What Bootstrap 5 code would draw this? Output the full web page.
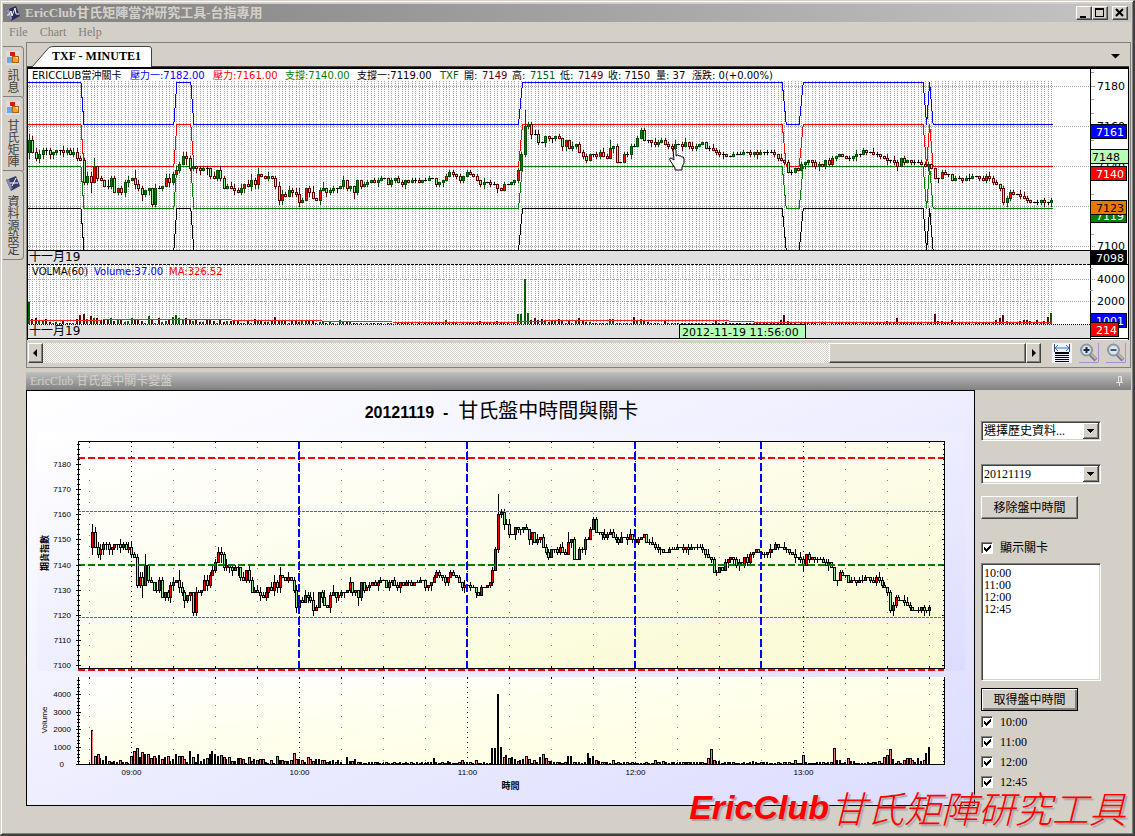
<!DOCTYPE html>
<html lang="zh-Hant">
<head>
<meta charset="utf-8">
<meta name="viewport" content="width=device-width, initial-scale=1">
<title>EricClub甘氏矩陣當沖研究工具-台指專用</title>
<link href="https://cdn.jsdelivr.net/npm/bootstrap@5.3.0/dist/css/bootstrap.min.css" rel="stylesheet">
<style>
:root{--face:#d4d0c8;--shade:#808080;--dark:#404040}
body{background:var(--face);color:#000;font:12px/16px "Liberation Serif","Noto Sans CJK TC",serif}
svg{display:block}
.app-window{border:1px solid var(--face);border-right:2px solid var(--dark);border-bottom:2px solid var(--dark);box-shadow:inset 1px 1px #fff,inset -1px -1px var(--shade);padding:3px 2px 2px 2px}
.caption-bar{height:18px;padding:0 3px 0 2px;background:linear-gradient(90deg,#808080,#c4c4c4);color:var(--face);font-size:13px;font-weight:700;line-height:18px}
.raised{border:1px solid;border-color:#fff var(--dark) var(--dark) #fff;box-shadow:inset -1px -1px var(--shade);background:var(--face);border-radius:0;padding:0;color:#000}
.cap-btn{width:16px;height:14px}
.menu-bar{height:20px;gap:12px;padding-left:6px}
.menu-bar a{color:#808080;text-decoration:none;line-height:20px}
.work-area{gap:2px}
.dock{width:21px;padding-top:5px}
.dock-tab{border:solid var(--shade);border-width:1px 1px 0 0;border-radius:0 4px 0 0;background:none;padding:4px 0;color:#404040;margin-top:-1px;line-height:20px}
.dock-tab:last-child{border-bottom-width:1px;border-radius:0 4px 4px 0}
.dock-tab span{writing-mode:vertical-rl;text-orientation:upright;font-family:"Noto Sans CJK TC",sans-serif;font-size:12px;margin-top:4px}
.doc-frame{border:1px solid var(--shade);padding-right:1px}
.tab-strip{height:24px;border-bottom:1px solid var(--dark)}
.doc-tab{position:relative;z-index:1;width:126px;height:24px;padding:3px 0 0 25px;border:0;background:none;font-weight:700;line-height:18px;text-align:left;white-space:nowrap}
.doc-tab svg{position:absolute;left:0;top:0;z-index:-1}
.chart-top{height:273px}
.scroll-row{height:27px;padding:3px 3px 4px 1px}
.track{background:repeating-conic-gradient(#fff 0 25%,#d4d0c8 0 50%) 0 0/2px 2px;height:20px}
.arrow-btn{width:15px;height:20px}
.thumb{width:197px;height:20px}
.tools{margin-left:11px;gap:7px}
.tool{width:20px;height:20px;border:0;padding:0;background:var(--face)}
.pane-title{height:18px;background:linear-gradient(#c0c0c0,#808080);color:var(--face);line-height:19px;padding:0 7px 0 4px}
.chart-bottom{height:416px}
.side{width:156px;padding:31px 0 0 6px}
.side select{width:120px;border-radius:0;color:#000;background-color:#fff;border:1px solid;border-color:var(--shade) #fff #fff var(--shade);box-shadow:inset 1px 1px var(--dark),inset -1px -1px var(--face);font:inherit;padding:0 2px}
.side .combo{appearance:none;height:20px;line-height:16px;background:#fff url("data:image/svg+xml,%3Csvg xmlns='http://www.w3.org/2000/svg' width='16' height='16' shape-rendering='crispEdges'%3E%3Cpath fill='%23404040' d='M0 0h16v16H0z'/%3E%3Cpath fill='%23fff' d='M0 0h15v15H0z'/%3E%3Cpath fill='%23808080' d='M1 1h14v14H1z'/%3E%3Cpath fill='%23d4d0c8' d='M1 1h13v13H1z'/%3E%3Cpath d='M4 6h7v1H4zM5 7h5v1H5zM6 8h3v1H6zM7 9h1v1H7z'/%3E%3C/svg%3E") no-repeat right 1px top 1px}
.side .combo + .combo{margin-top:23px}
.side .combo + .push{margin-top:12px}
.side .push + .levels{margin-top:19px}
.side .listing{height:118px;overflow:hidden;padding:2px;margin-top:5px}
.side .listing option{display:block;padding:0;height:12px;min-height:12px;line-height:12px;overflow:visible}
.side .listing + .push{margin:7px 0 1px}
.push{width:97px;height:23px;line-height:20px}
.push.is-default{outline:1px solid #000;outline-offset:-1px;border-color:#000;box-shadow:inset 1px 1px #fff,inset -2px -2px var(--shade)}
.tick-row{height:20px;gap:7px}
.tick-row input{appearance:none;width:12px;height:12px;margin:0;background:#fff;border:1px solid;border-color:var(--shade) #fff #fff var(--shade);box-shadow:inset 1px 1px var(--dark)}
.tick-row input:checked{background:#fff url("data:image/svg+xml,%3Csvg xmlns='http://www.w3.org/2000/svg' width='10' height='10' shape-rendering='crispEdges'%3E%3Cpath d='M2 4h1v3H2zM3 5h1v3H3zM4 6h1v3H4zM5 5h1v3H5zM6 4h1v3H6zM7 3h1v3H7zM8 2h1v3H8z'/%3E%3C/svg%3E") no-repeat}
.brand-mark{position:absolute;right:7px;bottom:7px;gap:1px;color:#f00;font:italic 700 34px/40px "Liberation Sans",sans-serif;text-shadow:2px 2px 1px #a8a8a8;pointer-events:none;white-space:nowrap}
.brand-mark span{font:italic 300 37px/40px "Noto Sans CJK TC",sans-serif}
.t-data{font-family:"DejaVu Sans","Noto Sans CJK TC",sans-serif}
.t-plot{font-family:"Liberation Sans","Noto Sans CJK TC",sans-serif}
</style>
</head>
<body>
<div class="app-window min-vh-100 d-flex flex-column position-relative">
  <header class="caption-bar d-flex align-items-center">
    <svg width="16" height="16" viewBox="0 0 16 16" class="flex-shrink-0"><path d="M1 5l10-4 4 10-9 5z" fill="#2c2c5c"/><path d="M1 5l5 11 1-3-3-9z" fill="#9090b8"/><path d="M2 10h2l2-4 1 5 3-8 1 6h3" fill="none" stroke="#fff"/></svg>
    <span class="flex-grow-1 ps-1">EricClub甘氏矩陣當沖研究工具-台指專用</span>
    <button class="raised cap-btn" aria-label="最小化"><svg width="14" height="12"><path d="M3 9h6v2H3z"/></svg></button>
    <button class="raised cap-btn me-1" aria-label="最大化"><svg width="14" height="12" shape-rendering="crispEdges"><path d="M2 1h9v9H2zM3 3v6h7V3z" fill-rule="evenodd"/></svg></button>
    <button class="raised cap-btn" aria-label="關閉"><svg width="14" height="12"><path d="M3 2l7 7M10 2l-7 7" stroke="#000" stroke-width="2"/></svg></button>
  </header>
  <nav class="menu-bar d-flex"><a href="#">File</a><a href="#">Chart</a><a href="#">Help</a></nav>

  <div class="work-area d-flex flex-grow-1">
    <div class="dock d-flex flex-column flex-shrink-0">
      <button class="dock-tab d-flex flex-column align-items-center"><svg width="14" height="14"><use href="#ico-blocks"/></svg><span>訊息</span></button>
      <button class="dock-tab d-flex flex-column align-items-center"><svg width="14" height="14"><use href="#ico-blocks"/></svg><span>甘氏矩陣</span></button>
      <button class="dock-tab d-flex flex-column align-items-center"><svg width="16" height="16" viewBox="0 0 16 16"><path d="M1 5l10-4 4 10-9 5z" fill="#3c3c68"/><path d="M1 5l5 11 1-3-3-9z" fill="#8888b0"/><path d="M5 8h8M11 3L7 11" stroke="#fff" fill="none"/></svg><span>資料源設定</span></button>
    </div>
    <svg width="0" height="0" class="position-absolute"><symbol id="ico-blocks" viewBox="0 0 14 14"><path d="M0 0h14v14H0z" fill="#dcdcdc"/><path d="M4 1h5v4H4z" fill="#d02010"/><path d="M1 6h5v6H1z" fill="#6aa8e0"/><path d="M6 5h7v7H6z" fill="#b06010"/><path d="M7 6h5v5H7z" fill="#f8a028"/><path d="M9 6h3v3z" fill="#ffe0a0"/></symbol></svg>

    <main class="flex-grow-1 overflow-hidden">
      <section class="doc-frame">
        <div class="tab-strip d-flex justify-content-between align-items-center pe-1">
          <button class="doc-tab"><svg width="126" height="24"><path d="M5 24L22 4.500Q24 3.500 27 3.500H122Q124.500 3.500 124.500 6V24" fill="#fff" stroke="#404040"/></svg>TXF - MINUTE1</button>
          <svg width="10" height="6" class="me-1 mt-1"><path d="M0 0h9L4.500 4.500z"/></svg>
        </div>
        <div class="chart-top" id="top"></div>
        <div class="scroll-row d-flex align-items-center">
          <button class="raised arrow-btn" aria-label="向左捲動"><svg width="13" height="18"><path d="M8 5v8L4 9z"/></svg></button>
          <div class="track flex-grow-1 d-flex justify-content-end"><div class="raised thumb"></div></div>
          <button class="raised arrow-btn" aria-label="向右捲動"><svg width="13" height="18"><path d="M5 5v8l4-4z"/></svg></button>
          <div class="tools d-flex">
            <button class="tool" aria-label="符合寬度"><svg width="20" height="20"><path d="M0 0h20v20H0z" fill="#f0f2ff"/><path d="M4 5h12M6 2L3 5l3 3M14 2l3 3-3 3" stroke="#3878c0" fill="none"/><path d="M2.500 1v8M17.500 1v8" stroke="#446"/><path d="M3 9h14v2H3zM3 12h14v1H3zM3 14h14v1H3zM3 16h14v1H3zM3 18h14v1H3z"/></svg></button>
            <button class="tool" aria-label="放大"><svg width="20" height="20"><path d="M19.500 0v19.500H0" stroke="#a890d8" fill="none"/><path d="M11 11l6 6" stroke="#7878a0" stroke-width="4"/><path d="M12 11l5 5" stroke="#d0b090" stroke-width="2"/><circle cx="7.500" cy="7" r="5.500" fill="#d8e8f0" stroke="#8898a8" stroke-width="2"/><path d="M4.500 7h6M7.500 4v6" stroke="#223" stroke-width="2"/></svg></button>
            <button class="tool" aria-label="縮小"><svg width="20" height="20"><path d="M19.500 0v19.500H0" stroke="#a890d8" fill="none"/><path d="M11 11l6 6" stroke="#7878a0" stroke-width="4"/><path d="M12 11l5 5" stroke="#d0b090" stroke-width="2"/><circle cx="7.500" cy="7" r="5.500" fill="#d8e8f0" stroke="#8898a8" stroke-width="2"/><path d="M4.500 7h6" stroke="#556" stroke-width="2"/></svg></button>
          </div>
        </div>
      </section>

      <section class="mt-1">
        <div class="pane-title d-flex justify-content-between align-items-center"><span>EricClub 甘氏盤中關卡變盤</span><svg width="8" height="10" fill="none" stroke="#e8e4dc"><path d="M2.500 6V.5h3V6M5 1v5M0 6.500h7M3.500 7v3"/></svg></div>
        <div class="d-flex">
          <div class="chart-bottom flex-grow-1 overflow-hidden" id="bottom"></div>
          <form class="side flex-shrink-0">
            <select class="combo d-block" aria-label="歷史資料"><option>選擇歷史資料...</option></select>
            <select class="combo d-block" aria-label="日期"><option>20121119</option></select>
            <button type="button" class="raised push d-block">移除盤中時間</button>
            <div class="tick-row levels d-flex align-items-center"><input type="checkbox" id="lv" checked><label for="lv">顯示關卡</label></div>
            <select multiple class="listing d-block" aria-label="盤中時間"><option>10:00</option><option>11:00</option><option>12:00</option><option>12:45</option></select>
            <button type="button" class="raised push is-default d-block">取得盤中時間</button>
            <div class="tick-row d-flex align-items-center"><input type="checkbox" id="t1" checked><label for="t1">10:00</label></div>
            <div class="tick-row d-flex align-items-center"><input type="checkbox" id="t2" checked><label for="t2">11:00</label></div>
            <div class="tick-row d-flex align-items-center"><input type="checkbox" id="t3" checked><label for="t3">12:00</label></div>
            <div class="tick-row d-flex align-items-center"><input type="checkbox" id="t4" checked><label for="t4">12:45</label></div>
          </form>
        </div>
      </section>
    </main>
  </div>
  <div class="brand-mark d-flex"><strong>EricClub</strong><span>甘氏矩陣研究工具</span></div>
</div>

<script src="https://cdn.jsdelivr.net/npm/bootstrap@5.3.0/dist/js/bootstrap.bundle.min.js"></script>
<script>
// One-minute closes (points above 7100), minutes counted from 08:45
const closes = [53,47,44,46,48,48,46,47,48,48,47,48,46,47,44,43,32,35,32,40,34,33,30,30,34,27,29,27,32,33,34,31,29,26,28,29,21,29,29,30,34,32,36,38,41,45,44,39,40,39,38,39,39,35,34,38,34,29,30,29,28,27,29,31,30,33,31,36,35,34,35,34,30,23,26,25,28,27,26,22,23,29,27,24,23,28,29,27,28,29,29,30,33,29,30,27,33,30,31,32,33,32,33,34,34,31,33,34,32,31,33,32,33,33,32,33,33,34,34,31,32,33,35,37,36,35,33,35,37,36,35,33,31,32,32,31,31,29,28,31,31,32,33,38,46,60,61,56,56,52,52,55,54,54,55,54,50,53,49,50,51,47,45,43,46,46,45,47,45,44,49,50,42,42,46,46,50,50,54,58,53,53,52,51,52,53,51,50,49,51,51,50,52,50,49,50,51,52,49,49,48,47,46,46,45,45,46,46,46,47,47,46,47,46,47,47,47,47,46,44,43,42,37,37,39,38,41,42,43,42,40,41,40,43,41,44,45,46,45,44,44,45,46,46,48,47,47,46,46,45,44,43,43,42,40,44,42,43,42,42,42,41,40,41,39,34,34,37,36,36,33,34,34,33,34,34,35,35,34,33,35,34,32,31,29,22,24,27,26,26,25,24,23,22,22,22,23,22,23,23,24,22,23];
const close = closes.map(v => 7100 + v);
while (close.length < 300) close.splice(290, 0, 7123);
close.length = 300;
close[298] = 7122; close[299] = 7123;
const rnd = i => { const s = Math.sin(i * 127.1) * 43758.5453; return s - Math.floor(s); };
const hiAt = {1:7156,20:7144,32:7138,46:7147,68:7139,124:7138,146:7168,147:7162,171:7153,180:7159};
const loAt = {1:7144,19:7127,34:7123,37:7120,96:7124,121:7130,173:7142,255:7138,266:7134,300:7120};
const bars = close.map((c, i) => {
  const o = i ? close[i - 1] : 7147, m = i + 1;
  const amp = m < 90 ? 3.2 : 2.3;
  return {m, o, c, h: hiAt[m] || Math.max(o, c) + Math.floor(rnd(m) * amp), l: loAt[m] || Math.min(o, c) - Math.floor(rnd(m + 500) * amp)};
});
// Minute volume in units of 19 contracts
const volStart = [103,24,30,18,12,24,9,7,9,7,12,7,6,4,25,40,48,22,36,30,30,18,24,18,28,14,20,24,9,16,30,24,24,16,7,38,21,7,30,10,14,18,31,40,30,24,27,20,16,21,8,9,18,18,16,3,21,8,16,12,15,14,6,4,12,4,24,12,12,9,9,12,34,16,16,12,7,21,15,10,14,14,12,12,7,10,12,6,12,6,1,20,10,8,15,6];
const volAt = {123:18,128:9,133:12,138:12,144:48,145:48,146:210,147:50,148:20,149:27,150:18,151:22,152:16,153:10,154:12,155:16,156:24,157:14,159:12,161:20,162:30,163:18,164:10,165:9,171:24,172:24,178:33,179:18,180:24,181:12,182:8,187:12,202:12,205:9,221:18,222:44,223:12,224:10,225:9,237:9,252:12,255:27,266:48,267:12,268:12,271:18,272:10,273:9,282:10,284:20,285:28,286:44,287:15,289:10,291:12,292:18,293:18,294:12,296:18,297:9,298:12,299:33,300:50};
bars.forEach(b => b.v = (volStart[b.m - 1] || volAt[b.m] || 2 + Math.floor(rnd(b.m + 900) * 6)) * 19);

const R = (x, y, w, h, f) => `<rect x="${x}" y="${y}" width="${w}" height="${h}" fill="${f}"/>`;
const L = (x1, y1, x2, y2, s, x = '') => `<path d="M${x1} ${y1}L${x2} ${y2}" stroke="${s}" ${x}/>`;
const T = (x, y, s, size, f = '#000', x2 = '') => `<text x="${x}" y="${y}" font-size="${size}" fill="${f}" ${x2}>${s}</text>`;

function candle(b, x, y, up, dn, flat) {
  const col = b.c > b.o ? up : b.c < b.o ? dn : flat;
  const t = Math.round(y(Math.max(b.o, b.c))), e = Math.round(y(Math.min(b.o, b.c)));
  const h = Math.round(y(b.h)), l = Math.round(y(b.l));
  let s = R(x, h, 1, l - h + 1, col);
  s += R(x - 1, t, 3, e - t + 1, col);
  if (e - t > 1) s += R(x, t + 1, 1, e - t - 1, b.c > b.o ? '#ff0000' : '#90ee90');
  return s;
}

function drawTop() {
  const box = document.getElementById('top'), W = box.clientWidth, H = 273;
  const ax = W - 39, end = ax - 38, step = (end - 3) / 299;
  const X = m => Math.round(2 + (m - 1) * step), Y = p => 19 + (7180 - p) * 2, V = v => 257 - v * 0.01125;
  let s = R(0, 0, W, H, '#fff') + R(1, 184, ax, 13, '#e0e0e0') + R(1, 258, ax, 14, '#e0e0e0');
  for (let m = 1; m <= 300; m++) {
    s += L(X(m) + .5, 14, X(m) + .5, 183, '#a0a0a0', 'stroke-dasharray="1 1"');
    s += L(X(m) + .5, 198, X(m) + .5, 257, '#a0a0a0', 'stroke-dasharray="1 1"');
  }
  [7180, 7160, 7140, 7120, 7100].forEach(p => s += L(1, Y(p) + .5, ax + 5, Y(p) + .5, '#a0a0a0', 'stroke-dasharray="1 1"'));
  [212.5, 234.5].forEach(y => s += L(1, y, ax + 5, y, '#a0a0a0', 'stroke-dasharray="1 1"'));
  // Support and resistance steps
  const f = (end - 2) / 1024, pts = [[0,1],[53,1],[56,0],[146,0],[149,1],[163,1],[166,0],[491,0],[495,1],[755,1],[759,0],[772,0],[776,1],[896,1],[899.5,0],[902.5,1],[906,0],[1026,0]];
  [[16,'#0000ff'],[58,'#ff0000'],[100,'#008000'],[142,'#000']].forEach(([y, c]) => {
    s += `<polyline fill="none" stroke="${c}" points="${pts.map(p => (1 + p[0] * f) + ',' + (y - .5 + (p[1] ? 0 : 42))).join(' ')}"/>`;
  });
  bars.forEach(b => s += candle(b, X(b.m), Y, '#005000', '#600000', '#000'));
  bars.forEach(b => { const y = Math.round(V(b.v)); s += R(X(b.m) - 1, y, 2, 257 - y, b.c > b.o || b.m == 1 ? '#006000' : '#600000'); });
  s += `<polyline fill="none" stroke="#ff2020" points="${[[2,254],[150,253],[260,254],[400,256],[480,256],[530,254],[690,254],[740,256],[880,256],[1026,256]].map(p => (p[0] * f) + ',' + (p[1] - .5)).join(' ')}"/>`;
  // Separators and frame
  s += L(0, 183.5, ax, 183.5, '#000') + L(0, 197.5, ax, 197.5, '#000', 'stroke-dasharray="3 1"') + L(0, 257.5, ax, 257.5, '#000', 'stroke-dasharray="1 1"');
  s += R(ax, 0, 1, H, '#000') + R(ax, 197, 39, 1, '#000') + R(0, 0, 1, H, '#000') + R(0, 0, W, 2, '#000') + R(0, 271, W, 1, '#000') + R(W - 1, 0, 1, H, '#000');
  for (let y = 5; y < 180; y += 13.5) s += L(ax + 1, Math.round(y) + .5, ax + 4, Math.round(y) + .5, '#a0a0a0');
  [201.5, 223.5].forEach(y => s += L(ax, y, ax + 3, y, '#a0a0a0'));
  // Headings
  [[5,'ERICCLUB當沖關卡','#000'],[103,'壓力一:7182.00','#0000ff'],[186,'壓力:7161.00','#ff0000'],[258,'支撐:7140.00','#008000'],[330,'支撐一:7119.00','#000'],[413,'TXF','#006000'],[437,'開:',''],[455,'7149','#600000'],[485,'高:',''],[503,'7151','#006000'],[533,'低:',''],[551,'7149','#600000'],[581,'收: 7150',''],[629,'量: 37',''],[665,'漲跌: 0(+0.00%)','']]
    .forEach(a => s += T(a[0], 12, a[1], 10, a[2] || '#000'));
  s += T(5, 208, 'VOLMA(60)', 10) + T(67, 208, 'Volume:37.00', 10, '#0000ff') + T(142, 208, 'MA:326.52', 10, '#ff0000');
  s += T(2, 194, '十一月19', 12) + T(2, 268, '十一月19', 12);
  [[7180,19],[7160,59],[7140,99],[7100,179],[4000,212],[2000,234]].forEach(a => s += T(ax + 7, a[1] + 4, a[0], 11, '#000'));
  // Price tags on the axis
  const tag = (y, t, c, k, w = 36, x = 6) => `<rect x="${ax + .5}" y="${y + .5}" width="${w}" height="14" fill="${c}" stroke="#000"/>` + T(ax + x, y + 12, t, 11, k);
  s += tag(57, 7161, '#0000ff', '#fff') + tag(82, 7148, '#b4ffb4', '#000', 38, 2) + tag(99, 7140, '#ff0000', '#fff') + tag(141, 7119, '#008000', '#fff') + tag(133, 7123, '#e87800', '#000') + tag(183, 7098, '#000', '#fff') + tag(246, 1001, '#0000ff', '#fff') + tag(255, 214, '#ff0000', '#fff', 28);
  // Crosshair time and hand pointer
  const tx = Math.round(653 * f);
  s += `<rect x="${tx + .5}" y="257.500" width="126" height="14" fill="#b4ffb4" stroke="#000"/>` + T(tx + 3, 269, '2012-11-19 11:56:00', 11);
  s += `<path shape-rendering="auto" transform="translate(${Math.round(643 * f)} 81)" fill="#fff" stroke="#000" d="M4 1.500Q6-.5 7 2V8Q9 6 10 8Q12 7 12.500 9Q15 8 15 11V15L13 19V22H6V20L1.500 13Q-.5 10 2 10L5 12Z"/>`;
  box.innerHTML = `<svg class="t-data" width="${W}" height="${H}" shape-rendering="crispEdges">${s}</svg>`;
}

function drawBottom() {
  const box = document.getElementById('bottom'), W = box.clientWidth, H = 416;
  const x0 = 52, x1 = W - 31, px = (x1 - x0) / 309.3;
  const X = m => x0 + 11.3 + m * px, Y = p => 74 + (7180 - p) * 2.5125, V = v => 374 - v * 0.0175;
  let s = `<defs>
  <linearGradient id="g0" x1="0" y1="0" x2="1" y2="1"><stop stop-color="#fff"/><stop offset="1" stop-color="#dcdcff"/></linearGradient>
  <linearGradient id="g1" x1="0" y1="0" x2="1" y2="1"><stop stop-color="#fff"/><stop offset="1" stop-color="#fafad2"/></linearGradient>
  <linearGradient id="g2" x1="0" y1="0" x2="1" y2="1"><stop stop-color="#fff"/><stop offset=".6" stop-color="#ffffe8"/><stop offset="1" stop-color="#ffffe0"/></linearGradient></defs>`;
  s += `<rect x=".5" y=".5" width="${W - 1}" height="${H - 1}" fill="url(#g0)" stroke="#000"/>` + R(11, 42, W - 21, 239, 'url(#g0)');
  s += R(x0, 51, x1 - x0, 227, 'url(#g1)') + R(x0, 287, x1 - x0, 88, 'url(#g2)');
  for (let m = 0; m <= 300; m += 15) {
    const x = Math.round(X(m)) + .5, hr = m % 60 == 15;
    [[51, 278], [287, 374]].forEach(([a, b]) => {
      s += L(x, a + (hr ? 0 : 6), x, b, hr ? '#000' : '#808080', `stroke-dasharray="${hr ? '1 4' : '1 10'}"`);
      s += L(x, a, x, a + 2, '#000') + L(x, b - 2, x, b, '#000');
    });
    if (hr) s += T(x, 385, String(9 + (m - 15) / 60).padStart(2, '0') + ':00', 8, '#000', 'text-anchor="middle"');
  }
  bars.forEach(b => s += candle(b, Math.round(X(b.m)), Y, '#000', '#000', '#000'));
  bars.forEach(b => { const y = Math.round(V(b.v)), x = Math.round(X(b.m)); s += R(x - 1, y, b.c >= b.o ? 2 : 3, 374 - y, '#000'); if (b.c < b.o || b.m == 1) s += R(x, y + 1, 1, 373 - y, '#f08080'); });
  const hl = (p, c, w, d) => L(x0, Math.round(Y(p)) + (w > 1 ? 0 : .5), x1, Math.round(Y(p)) + (w > 1 ? 0 : .5), c, `stroke-width="${w}" stroke-dasharray="${d}"`);
  s += hl(7182.4, '#ff0000', 2, '7 3') + hl(7161.2, '#ff00ff', 1, '3 1') + hl(7140, '#008000', 2, '7 3') + hl(7119.2, '#ff00ff', 1, '3 1');
  [75, 135, 195, 240].forEach(m => s += L(Math.round(X(m)), 51, Math.round(X(m)), 278, '#0000ff', 'stroke-width="2" stroke-dasharray="8 3"'));
  s += `<path d="M${x0 + .5} 51.500H${x1 + .5}V278.500H${x0 + .5}ZM${x0 + .5} 287V374.500H${x1 + .5}V287" fill="none" stroke="#000"/>`;
  s += hl(7098, '#ff0000', 2, '7 3');
  for (let p = 7100; p <= 7188; p += 2) {
    const y = Math.round(Y(p)) + .5, M = p % 10 == 0;
    s += L(x0 - (M ? 2 : 1), y, x0 + (M ? 3 : 2), y, '#000') + L(x1 - (M ? 2 : 1), y, x1, y, '#000');
    if (M) s += T(45, y + 2.5, p, 8, '#000', 'text-anchor="end"');
  }
  for (let v = 0; v <= 4800; v += 200) {
    const y = Math.round(V(v)) + .5, M = v % 1000 == 0;
    s += L(x0 - (M ? 2 : 1), y, x0 + (M ? 3 : 2), y, '#000') + L(x1 - (M ? 2 : 1), y, x1, y, '#000');
    if (M) s += T(v ? 45 : 38, y + 2.5, v, 8, '#000', 'text-anchor="end"');
  }
  s += `<text x="${W / 2 + 1}" y="28" text-anchor="middle" font-size="20" xml:space="preserve"><tspan font-size="16" font-weight="700">20121119  - </tspan> 甘氏盤中時間與關卡</text>`;
  s += T(W / 2 + 10, 399, '時間', 9, '#000', 'text-anchor="middle" font-weight="700"');
  s += T(0, 0, '期貨指數', 9, '#000', 'text-anchor="middle" font-weight="700" transform="translate(22 163) rotate(-90)"');
  s += T(0, 0, 'Volume', 8, '#000', 'text-anchor="middle" transform="translate(21 330) rotate(-90)"');
  box.innerHTML = `<svg class="t-plot" width="${W}" height="${H}" shape-rendering="crispEdges">${s}</svg>`;
}
function draw() { drawTop(); drawBottom(); }
draw();
addEventListener('resize', draw);
</script>
</body>
</html>
